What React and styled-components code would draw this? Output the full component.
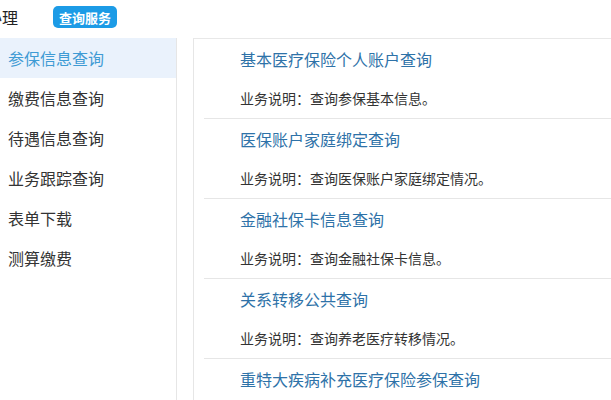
import React from "react";
import styled, { createGlobalStyle } from "styled-components";

const Global = createGlobalStyle`
  html, body { margin: 0; padding: 0; background: #fff; overflow: hidden; }
  body { font-family: "Microsoft YaHei", "Noto Sans CJK SC", "Noto Sans", sans-serif; }
`;

const Page = styled.div`
  width: 611px;
  height: 400px;
  overflow: hidden;
  display: flex;
  flex-direction: column;
`;

const Header = styled.div`
  height: 38px;
  box-sizing: border-box;
  padding-bottom: 4px;
  display: flex;
  align-items: center;
  flex-shrink: 0;
`;

const HeaderTitle = styled.div`
  margin-left: -14px;
  font-size: 16px;
  color: #222;
  line-height: 1;
`;

const Badge = styled.div`
  margin-left: 35px;
  height: 22px;
  padding: 0 6px;
  border-radius: 5px;
  background: #1c9be6;
  color: #fff;
  font-size: 13px;
  font-weight: bold;
  display: flex;
  align-items: center;
  line-height: 1;
`;

const Body = styled.div`
  flex: 1;
  display: flex;
  gap: 16px;
  min-height: 0;
`;

const Sidebar = styled.div`
  width: 177px;
  box-sizing: border-box;
  border-right: 1px solid #e6e6e6;
  display: flex;
  flex-direction: column;
  flex-shrink: 0;
`;

const NavItem = styled.div`
  height: 40px;
  display: flex;
  align-items: center;
  padding-left: 8px;
  font-size: 16px;
  color: ${(p) => (p.$active ? "#3f9bd4" : "#333")};
  background: ${(p) => (p.$active ? "#eaf2fc" : "transparent")};
`;

const Panel = styled.div`
  flex: 1;
  border-left: 1px solid #e6e6e6;
  border-top: 1px solid #e8e8e8;
  display: flex;
  flex-direction: column;
`;

const Item = styled.div`
  margin-left: 10px;
  border-bottom: 1px solid #e6e6e6;
  flex-shrink: 0;
`;

const ItemTitle = styled.div`
  height: 40px;
  display: flex;
  align-items: center;
  padding-left: 36px;
  font-size: 16px;
  color: #2e72a8;
`;

const ItemDesc = styled.div`
  height: 39px;
  display: flex;
  align-items: center;
  padding-left: 36px;
  padding-bottom: 2px;
  box-sizing: border-box;
  font-size: 14px;
  color: #333;
`;

const nav = ["参保信息查询", "缴费信息查询", "待遇信息查询", "业务跟踪查询", "表单下载", "测算缴费"];

const items = [
  ["基本医疗保险个人账户查询", "业务说明：查询参保基本信息。"],
  ["医保账户家庭绑定查询", "业务说明：查询医保账户家庭绑定情况。"],
  ["金融社保卡信息查询", "业务说明：查询金融社保卡信息。"],
  ["关系转移公共查询", "业务说明：查询养老医疗转移情况。"],
  ["重特大疾病补充医疗保险参保查询", "业务说明：查询重特大疾病补充医疗保险参保情况。"],
];

export default function App() {
  return (
    <Page>
      <Global />
      <Header>
        <HeaderTitle>办理</HeaderTitle>
        <Badge>查询服务</Badge>
      </Header>
      <Body>
        <Sidebar>
          {nav.map((n, i) => (
            <NavItem key={n} $active={i === 0}>
              {n}
            </NavItem>
          ))}
        </Sidebar>
        <Panel>
          {items.map(([t, d]) => (
            <Item key={t}>
              <ItemTitle>{t}</ItemTitle>
              <ItemDesc>{d}</ItemDesc>
            </Item>
          ))}
        </Panel>
      </Body>
    </Page>
  );
}
